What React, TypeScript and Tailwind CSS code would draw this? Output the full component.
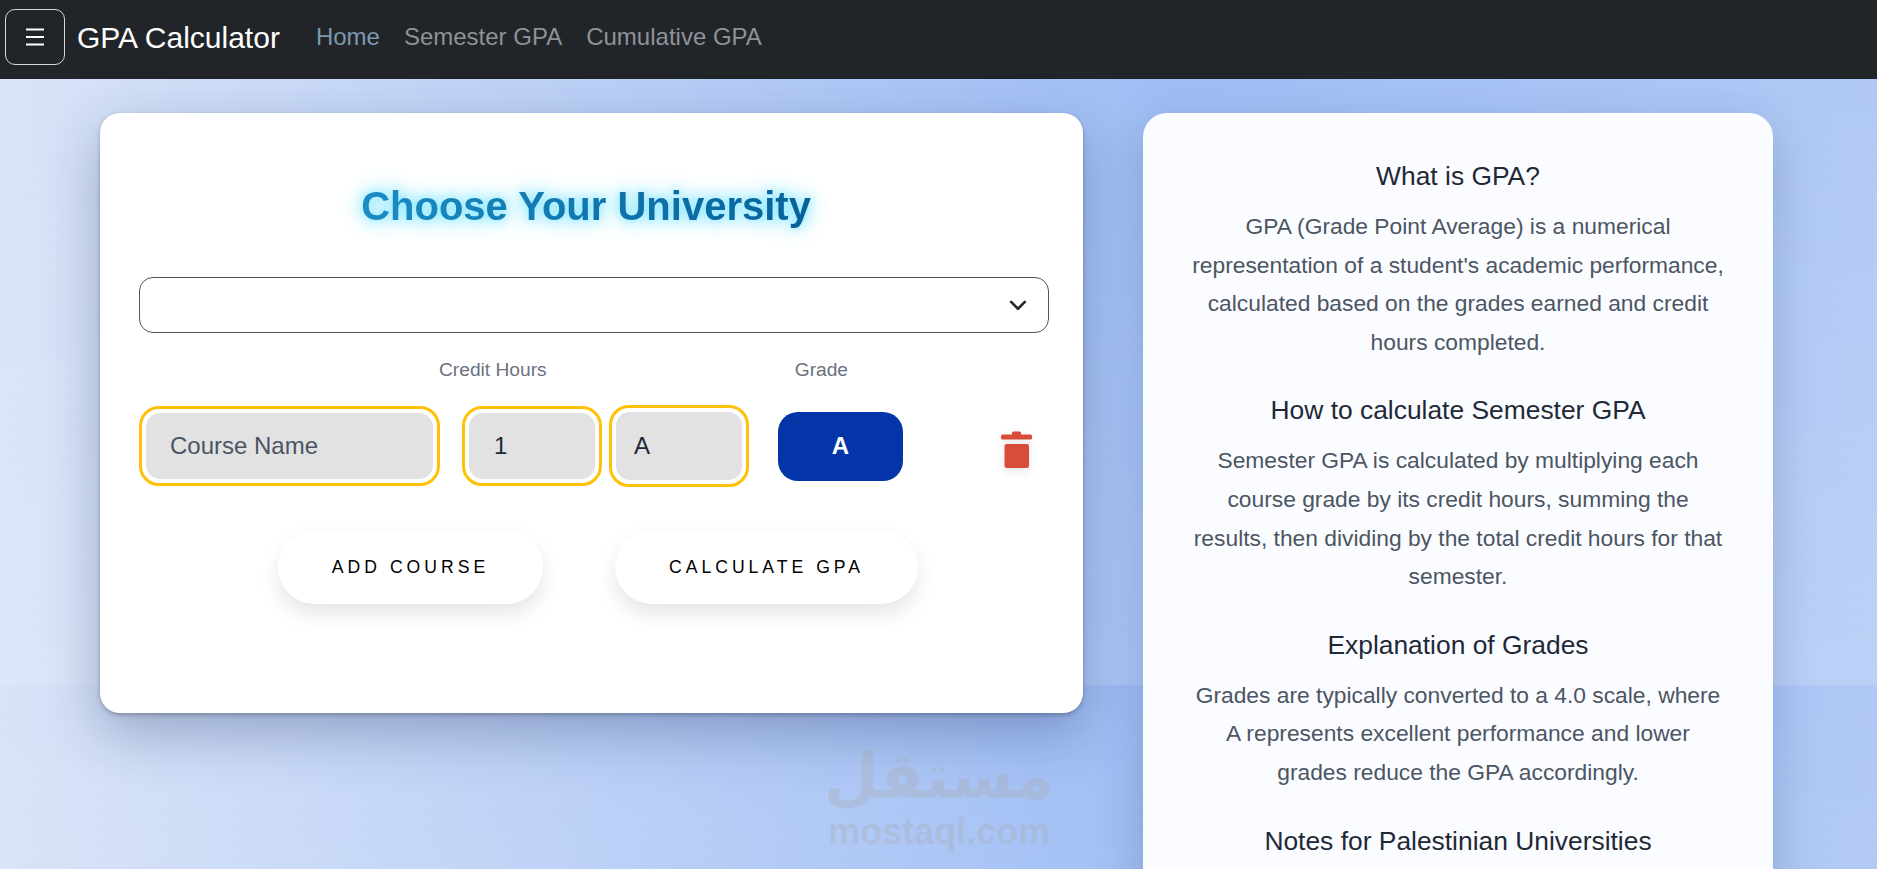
import React from "react";

const sections = [
  {
    h: "What is GPA?",
    p: "GPA (Grade Point Average) is a numerical representation of a student's academic performance, calculated based on the grades earned and credit hours completed.",
  },
  {
    h: "How to calculate Semester GPA",
    p: "Semester GPA is calculated by multiplying each course grade by its credit hours, summing the results, then dividing by the total credit hours for that semester.",
  },
  {
    h: "Explanation of Grades",
    p: "Grades are typically converted to a 4.0 scale, where A represents excellent performance and lower grades reduce the GPA accordingly.",
  },
  {
    h: "Notes for Palestinian Universities",
    p: "",
  },
];

function Ring({ w, children }: { w: string; children: React.ReactNode }) {
  return <div className={`${w} rounded-[20px] border-[3px] border-[#ffc107] bg-white p-[4px]`}>{children}</div>;
}

export default function App() {
  return (
    <div className="relative h-[869px] overflow-hidden bg-[linear-gradient(180deg,rgba(255,255,255,0),rgba(255,255,255,0.16)),linear-gradient(92deg,#d8e3f8_0%,#9dbcf5_62%,#b0c8f5_100%)] bg-[length:100%_685px] font-['Liberation_Sans',sans-serif]">
      <nav className="flex h-[79px] items-center bg-[#212529] pb-[5px] pl-[5px]">
        <button className="flex h-[56px] w-[60px] items-center justify-center rounded-[10px] border border-[#d5d7d9]">
          <svg width="20" height="20" viewBox="0 0 20 20" stroke="white" strokeWidth="2">
            <path d="M1 2.5h18M1 10h18M1 17.5h18" />
          </svg>
        </button>
        <span className="ml-[12px] text-[30px] text-white">GPA Calculator</span>
        <div className="ml-[36px] flex gap-[24px] text-[24px] text-[#8e9296]">
          <span className="text-[#7f98ae]">Home</span>
          <span>Semester GPA</span>
          <span>Cumulative GPA</span>
        </div>
      </nav>

      <main className="flex items-start gap-[60px] pl-[100px] pt-[34px]">
        <section className="h-[600px] w-[983px] rounded-[20px] bg-white px-[39px] pt-[65px] shadow-[0_20px_55px_rgba(20,40,90,0.3),0_2px_4px_rgba(0,0,0,0.25)]">
          <h1 className="mx-auto w-fit bg-[linear-gradient(90deg,#1b8cc4,#06609a)] bg-clip-text pr-[11px] text-center text-[40px] leading-[56px] font-bold text-transparent [filter:drop-shadow(0_0_5px_#8fe9ff)_drop-shadow(0_0_10px_#8fe9ff)]">
            Choose Your University
          </h1>
          <div className="mt-[43px] flex h-[56px] w-[910px] items-center justify-end rounded-[14px] border border-[#4b5563] bg-white pr-[20px]">
            <svg width="20" height="20" viewBox="0 0 16 16" fill="none" stroke="#212529" strokeWidth="2" strokeLinecap="round" strokeLinejoin="round">
              <path d="M2.5 5.5 8 11l5.5-5.5" />
            </svg>
          </div>

          <div className="mt-[24px] flex h-[26px] items-center text-[19.2px] text-[#6b7280]">
            <span className="ml-[300px]">Credit Hours</span>
            <span className="ml-[248px]">Grade</span>
          </div>

          <div className="mt-[22px] flex items-center">
            <Ring w="w-[301px]">
              <input
                placeholder="Course Name"
                className="h-[66px] w-full rounded-[14px] bg-[#e2e2e2] px-[24px] text-[24px] text-[#1f2937] outline-none placeholder:text-[#4b5563]"
              />
            </Ring>
            <div className="ml-[22px]">
              <Ring w="w-[140px]">
                <input
                  defaultValue="1"
                  className="h-[66px] w-full rounded-[14px] bg-[#e2e2e2] px-[25px] text-[24px] text-[#1f2937] outline-none"
                />
              </Ring>
            </div>
            <div className="ml-[7px]">
              <Ring w="w-[140px]">
                <input
                  defaultValue="A"
                  className="h-[68px] w-full rounded-[14px] bg-[#e2e2e2] px-[18px] text-[24px] text-[#1f2937] outline-none"
                />
              </Ring>
            </div>
            <button className="ml-[29px] h-[69px] w-[125px] rounded-[20px] bg-[#0335a8] text-[24px] font-bold text-white">A</button>
            <svg className="relative top-[3px] ml-[98px] drop-shadow-[0_3px_5px_rgba(0,0,0,0.1)]" width="31" height="37" viewBox="0 0 31 37" fill="#d94d38">
              <path d="M11 3.5V2a1.5 1.5 0 0 1 1.5-1.5h6A1.5 1.5 0 0 1 20 2v1.5h9.5a1.5 1.5 0 0 1 1.5 1.5v2a1.5 1.5 0 0 1-1.5 1.5h-28A1.5 1.5 0 0 1 0 7V5a1.5 1.5 0 0 1 1.5-1.5z" />
              <rect x="3.5" y="13" width="24.5" height="24" rx="2" />
            </svg>
          </div>

          <div className="mt-[43px] flex">
            <button className="ml-[139px] h-[74px] w-[265px] rounded-[40px] bg-white pt-[1px] text-[17.6px] tracking-[4px] text-black shadow-[0_10px_20px_rgba(0,0,0,0.1)]">
              ADD COURSE
            </button>
            <button className="ml-[72px] h-[74px] w-[303px] rounded-[40px] bg-white pt-[1px] text-[17.6px] tracking-[4px] text-black shadow-[0_10px_20px_rgba(0,0,0,0.1)]">
              CALCULATE GPA
            </button>
          </div>
        </section>

        <aside className="h-[900px] w-[630px] rounded-[24px] bg-[#fbfcff] px-[46px] pt-[47px] text-center shadow-[0_15px_45px_rgba(20,40,90,0.22)]">
          {sections.map((s) => (
            <div key={s.h} className="mb-[33px]">
              <h2 className="text-[26.4px] leading-[32px] text-[#1f2937]">{s.h}</h2>
              {s.p && <p className="mt-[15px] text-[22.8px] leading-[38.6px] text-[#4b5563]">{s.p}</p>}
            </div>
          ))}
        </aside>
      </main>

      <div className="absolute left-[826px] top-[740px] flex w-[226px] flex-col items-center text-[#a9a9a9] opacity-30">
        <span className="text-[63px] leading-[74px] font-bold font-['DejaVu_Sans',sans-serif]">مستقل</span>
        <span className="text-[36px] leading-[36px] font-bold">mostaql.com</span>
      </div>
    </div>
  );
}
